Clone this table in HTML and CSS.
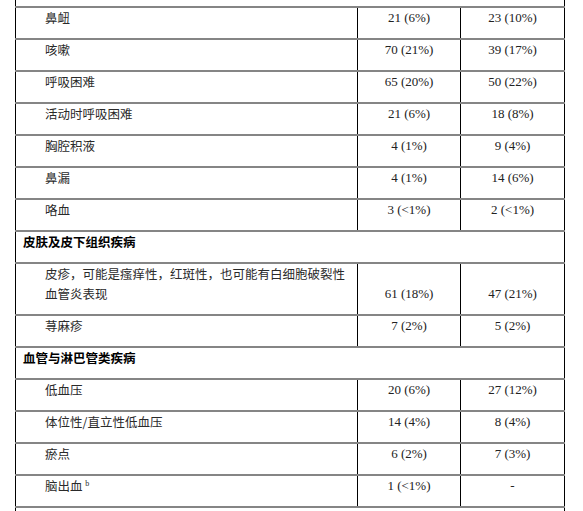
FILE: index.html
```html
<!DOCTYPE html>
<html lang="zh-CN">
<head>
<meta charset="utf-8">
<title>不良反应表</title>
<link rel="stylesheet" href="styles.css">
</head>
<body>
<table class="ae-table">
  <colgroup>
    <col class="c-term">
    <col class="c-num">
    <col class="c-num2">
  </colgroup>
  <tbody>
    <tr class="edge-top"><td colspan="3"></td></tr>
    <tr><td class="term">鼻衄</td><td class="num">21 (6%)</td><td class="num">23 (10%)</td></tr>
    <tr><td class="term">咳嗽</td><td class="num">70 (21%)</td><td class="num">39 (17%)</td></tr>
    <tr><td class="term">呼吸困难</td><td class="num">65 (20%)</td><td class="num">50 (22%)</td></tr>
    <tr><td class="term">活动时呼吸困难</td><td class="num">21 (6%)</td><td class="num">18 (8%)</td></tr>
    <tr><td class="term">胸腔积液</td><td class="num">4 (1%)</td><td class="num">9 (4%)</td></tr>
    <tr><td class="term">鼻漏</td><td class="num">4 (1%)</td><td class="num">14 (6%)</td></tr>
    <tr><td class="term">咯血</td><td class="num">3 (&lt;1%)</td><td class="num">2 (&lt;1%)</td></tr>
    <tr class="section"><td colspan="3">皮肤及皮下组织疾病</td></tr>
    <tr class="tall"><td class="term">皮疹，可能是瘙痒性，红斑性，也可能有白细胞破裂性<br>血管炎表现</td><td class="num">61 (18%)</td><td class="num">47 (21%)</td></tr>
    <tr><td class="term">荨麻疹</td><td class="num">7 (2%)</td><td class="num">5 (2%)</td></tr>
    <tr class="section"><td colspan="3">血管与淋巴管类疾病</td></tr>
    <tr><td class="term">低血压</td><td class="num">20 (6%)</td><td class="num">27 (12%)</td></tr>
    <tr><td class="term">体位性/直立性低血压</td><td class="num">14 (4%)</td><td class="num">8 (4%)</td></tr>
    <tr><td class="term">瘀点</td><td class="num">6 (2%)</td><td class="num">7 (3%)</td></tr>
    <tr><td class="term">脑出血 <sup class="note">b</sup></td><td class="num">1 (&lt;1%)</td><td class="num">-</td></tr>
    <tr class="edge-bottom"><td colspan="3"></td></tr>
  </tbody>
</table>
</body>
</html>
```

FILE: styles.css
```css
html, body {
  margin: 0;
  padding: 0;
  background: #ffffff;
}

body {
  font-family: "Liberation Serif", "Noto Sans CJK SC", serif;
  color: #222222;
}

.ae-table {
  margin-left: 15px;
  border-collapse: collapse;
  table-layout: fixed;
  width: 549px;
}

.c-term { width: 342px; }
.c-num { width: 103px; }
.c-num2 { width: 104px; }

.ae-table td {
  border-left: 1px solid #000000;
  border-right: 1px solid #000000;
  padding: 0 0 10px 0;
  line-height: 20px;
  vertical-align: bottom;
}

.ae-table tr + tr td {
  border-top: 2px solid #858585;
}

.ae-table .edge-top td {
  height: 6px;
  padding: 0;
  line-height: 6px;
}

.ae-table .edge-bottom td {
  height: 10px;
  padding: 0;
}

.term {
  font-family: "Noto Sans CJK SC", sans-serif;
  font-size: 12.5px;
  padding-left: 29px !important;
  color: #2a2a2a;
  vertical-align: top !important;
}

.num {
  text-align: center;
  font-size: 13px;
}

.section td {
  font-family: "Noto Sans CJK SC", sans-serif;
  font-weight: 700;
  font-size: 12.5px;
  color: #000000;
  padding-left: 7px;
  vertical-align: top;
}

.tall .term {
  padding-top: 0;
}

.note {
  font-family: "Liberation Serif", serif;
  font-size: 8px;
  line-height: 0;
  vertical-align: 5px;
}
```
